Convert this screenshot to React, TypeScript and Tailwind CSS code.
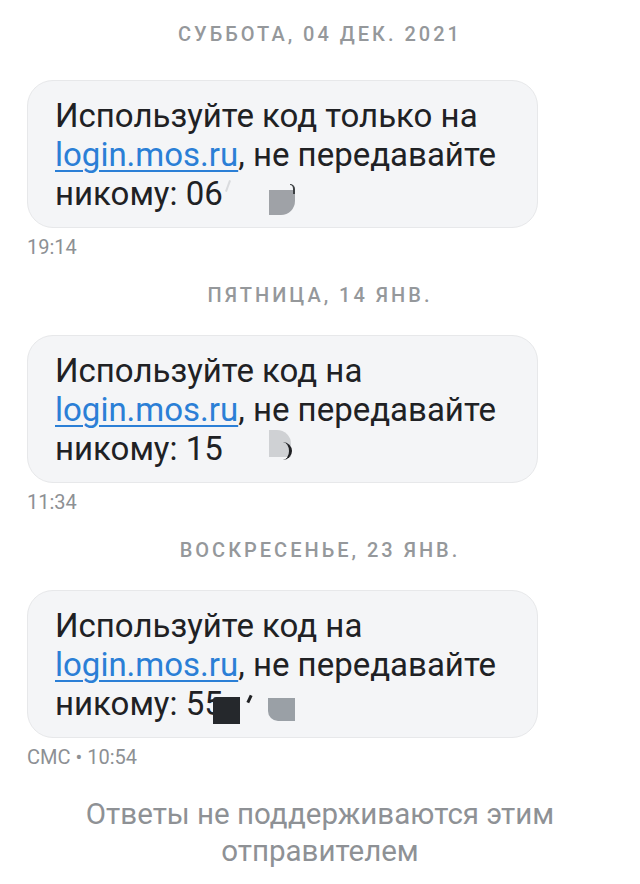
import type { ReactNode } from 'react';

interface Message {
  date: string;
  first: string;
  digits: string;
  meta: string;
  smudges: ReactNode;
}

const MESSAGES: Message[] = [
  {
    date: 'Суббота, 04 дек. 2021',
    first: 'Используйте код только на',
    digits: '06',
    meta: '19:14',
    smudges: (
      <>
        <span className="absolute left-[199px] top-[99px] h-[12px] w-[2px] rotate-[20deg] bg-[#d9dbde]" />
        <span className="absolute left-[241px] top-[109px] h-[25px] w-[26px] rounded-br-[14px] bg-[#9fa2a7]" />
        <span className="absolute left-[262px] top-[103px] h-[10px] w-[5px] rounded-tr-full border-r-2 border-t border-[#3c4043]" />
      </>
    ),
  },
  {
    date: 'Пятница, 14 янв.',
    first: 'Используйте код на',
    digits: '15',
    meta: '11:34',
    smudges: (
      <>
        <span className="absolute left-[241px] top-[94px] h-[27px] w-[22px] rounded-tr-[14px] bg-[#cfd1d4]" />
        <span className="absolute left-[254px] top-[106px] h-[18px] w-[10px] rounded-r-full border-r-[3px] border-[#202124]" />
      </>
    ),
  },
  {
    date: 'Воскресенье, 23 янв.',
    first: 'Используйте код на',
    digits: '55',
    meta: 'СМС • 10:54',
    smudges: (
      <>
        <span className="absolute left-[185px] top-[106px] h-[27px] w-[27px] rounded-tl-[3px] bg-[#25282c]" />
        <span className="absolute left-[220px] top-[104px] h-[8px] w-[3px] rotate-[25deg] bg-[#202124]" />
        <span className="absolute left-[240px] top-[107px] h-[23px] w-[27px] rounded-bl-[10px] bg-[#9aa0a6]" />
      </>
    ),
  },
];

function Bubble({ m }: { m: Message }) {
  return (
    <div className="relative ml-[27px] h-[148px] w-[511px] rounded-[26px] border border-[#e7e8ea] bg-[#f4f5f7] pl-[27px] pt-[15px] text-[33px] leading-[39px] text-[#202124]">
      <div>{m.first}</div>
      <div>
        <span className="text-[#2b7fd6] underline decoration-[1.5px] underline-offset-[4px]">login.mos.ru</span>, не передавайте
      </div>
      <div>никому: {m.digits}</div>
      {m.smudges}
    </div>
  );
}

export default function App() {
  return (
    <div className="min-h-[884px] bg-white pt-[22px]" style={{ fontFamily: 'Roboto, "Noto Sans", sans-serif' }}>
      {MESSAGES.map((m, i) => (
        <div key={m.meta} className={i === 0 ? '' : 'mt-[25px]'}>
          <div
            className={`text-center text-[20px] font-medium uppercase leading-[24px] tracking-[0.15em] text-[#95989b] ${
              i === 0 ? 'mb-[34px]' : 'mb-[28px]'
            }`}
          >
            {m.date}
          </div>
          <Bubble m={m} />
          <div className="ml-[27px] mt-[8px] text-[20px] leading-[22px] text-[#8d9094]">{m.meta}</div>
        </div>
      ))}
      <div className="mt-[28px] text-center text-[29.5px] leading-[37px] text-[#8e9195]">
        Ответы не поддерживаются этим
        <br />
        отправителем
      </div>
    </div>
  );
}
